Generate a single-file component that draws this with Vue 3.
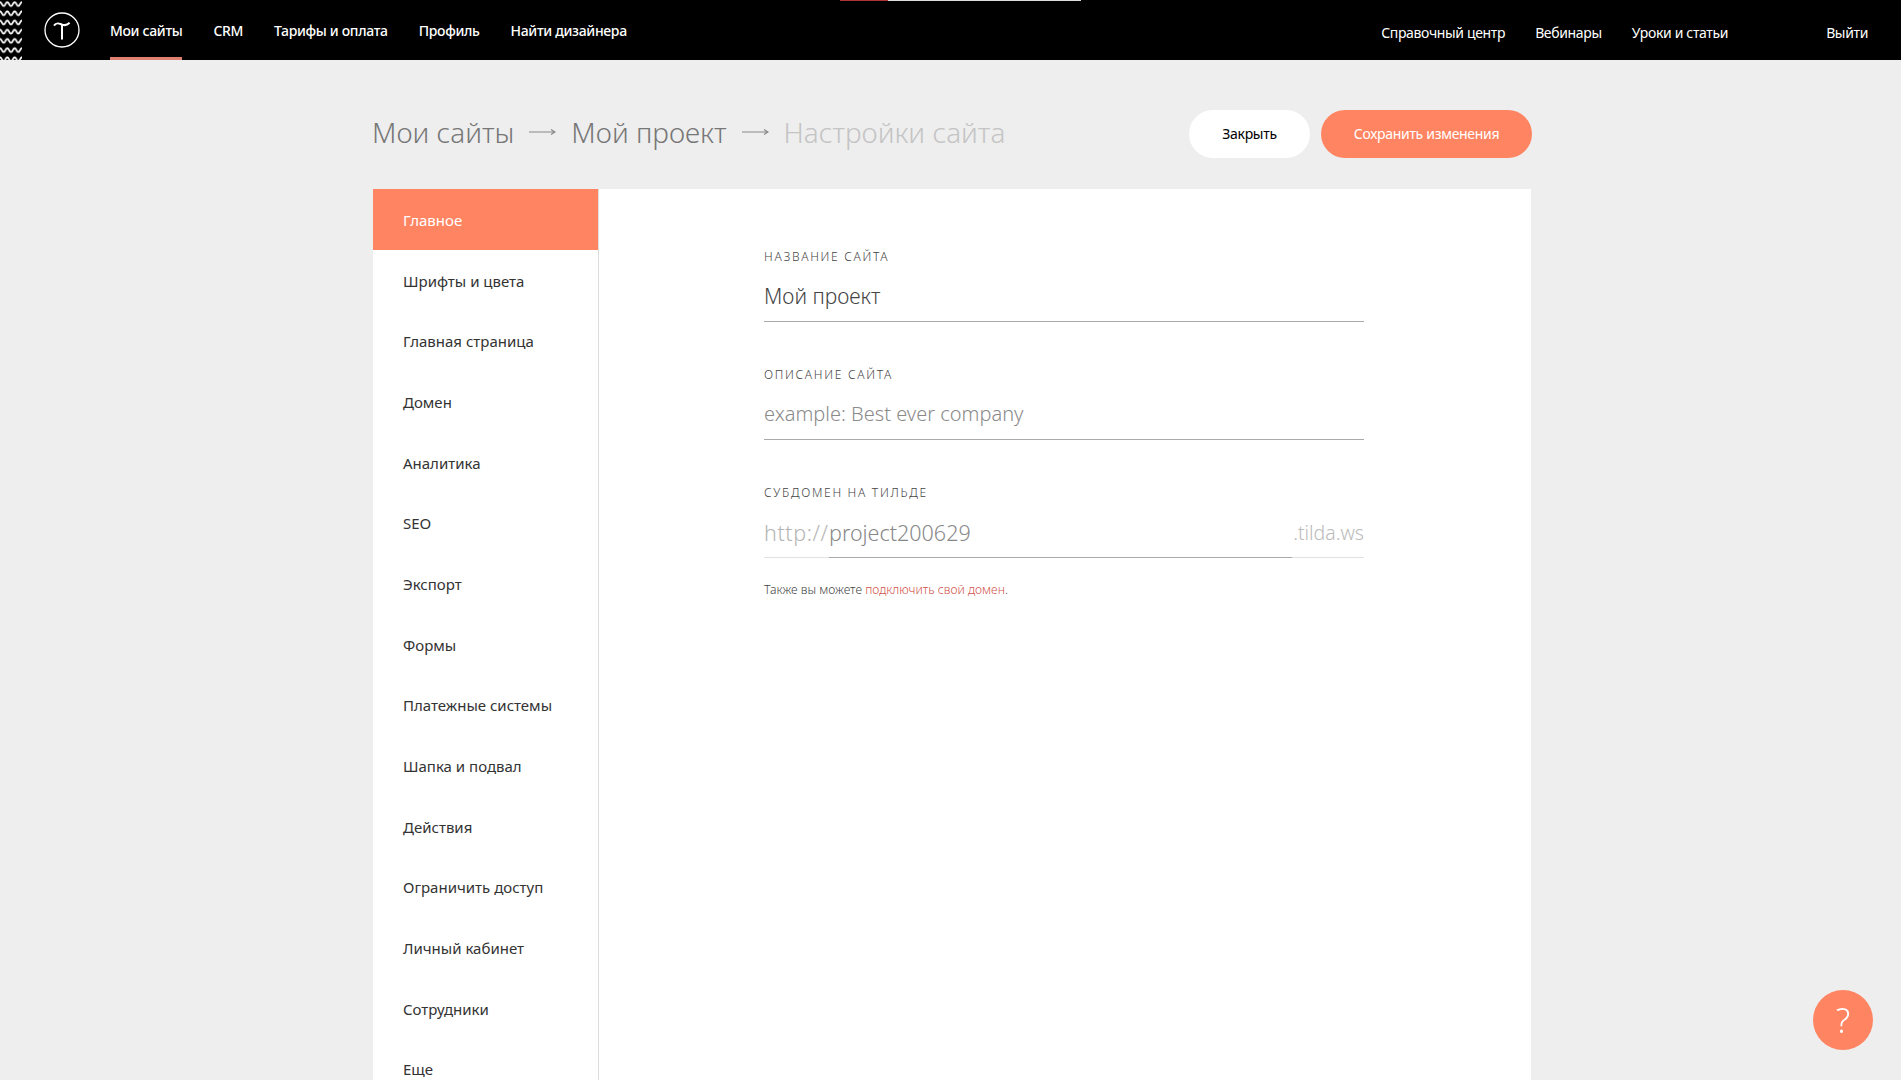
<template>
  <div class="page">
    <header class="topbar">
      <div class="progress"><span class="progress-done" /></div>
      <svg class="zigzag" width="22" height="60" aria-hidden="true">
        <defs>
          <pattern id="zz" width="7.33" height="9.2" patternUnits="userSpaceOnUse">
            <path d="M0 2 C1.8 2 1.8 6 3.66 6 S5.5 2 7.33 2" fill="none" stroke="#fff" stroke-width="1.8" />
          </pattern>
        </defs>
        <rect width="22" height="60" fill="url(#zz)" />
      </svg>
      <svg class="logo" width="36" height="36" viewBox="0 0 36 36" aria-hidden="true">
        <circle cx="18" cy="18" r="17" fill="none" stroke="#fff" stroke-width="1.3" />
        <path d="M10 13.6 C12.5 9.8 15.5 11.6 18 12.6 C20.5 13.6 23 13.4 25.6 10.8" fill="none" stroke="#fff" stroke-width="2" />
        <path d="M18 12.6 V27.5" fill="none" stroke="#fff" stroke-width="2" />
      </svg>
      <nav class="nav-main">
        <a v-for="item in mainNav" :key="item" class="nav-link" :class="{ active: item === 'Мои сайты' }">{{ item }}</a>
      </nav>
      <nav class="nav-side">
        <a v-for="item in sideNav" :key="item" class="side-link">{{ item }}</a>
        <a class="side-link logout">Выйти</a>
      </nav>
    </header>

    <main class="wrap">
      <div class="title-row">
        <div class="crumbs">
          <span>Мои сайты</span>
          <svg class="arrow" width="27" height="10" viewBox="0 0 27 10"><path d="M0 5H26M22 2.5L26 5L22 7.5" fill="none" stroke="#888" stroke-width="1.2" /></svg>
          <span>Мой проект</span>
          <svg class="arrow" width="27" height="10" viewBox="0 0 27 10"><path d="M0 5H26M22 2.5L26 5L22 7.5" fill="none" stroke="#888" stroke-width="1.2" /></svg>
          <span class="crumb-current">Настройки сайта</span>
        </div>
        <div class="actions">
          <button class="btn btn-close">Закрыть</button>
          <button class="btn btn-save">Сохранить изменения</button>
        </div>
      </div>

      <div class="panel">
        <ul class="menu">
          <li v-for="(item, i) in menu" :key="item" class="menu-item" :class="{ active: i === 0 }">{{ item }}</li>
        </ul>
        <section class="form">
          <div class="field">
            <div class="label">Название сайта</div>
            <div class="input value">Мой проект</div>
          </div>
          <div class="field">
            <div class="label">Описание сайта</div>
            <div class="input placeholder">example: Best ever company</div>
          </div>
          <div class="field">
            <div class="label">Субдомен на тильде</div>
            <div class="subdomain">
              <span class="sub-prefix">http://</span>
              <span class="sub-name">project200629</span>
              <span class="sub-suffix">.tilda.ws</span>
            </div>
            <p class="note">Также вы можете <a class="note-link">подключить свой домен</a>.</p>
          </div>
        </section>
      </div>
    </main>

    <button class="help">?</button>
  </div>
</template>

<script setup>
const mainNav = ['Мои сайты', 'CRM', 'Тарифы и оплата', 'Профиль', 'Найти дизайнера']
const sideNav = ['Справочный центр', 'Вебинары', 'Уроки и статьи']
const menu = [
  'Главное',
  'Шрифты и цвета',
  'Главная страница',
  'Домен',
  'Аналитика',
  'SEO',
  'Экспорт',
  'Формы',
  'Платежные системы',
  'Шапка и подвал',
  'Действия',
  'Ограничить доступ',
  'Личный кабинет',
  'Сотрудники',
  'Еще'
]
</script>

<style>
html, body {
  margin: 0;
  background: #eeeeee;
  overflow-x: hidden;
}
</style>

<style scoped>
.page {
  font-family: "Noto Sans", "Open Sans", sans-serif;
  color: #333;
}

.topbar {
  position: relative;
  display: flex;
  align-items: center;
  height: 60px;
  background: #000;
  color: #fff;
}

.progress {
  position: absolute;
  top: 0;
  left: 840px;
  width: 241px;
  height: 1px;
  background: #ddd;
}

.progress-done {
  display: block;
  width: 48px;
  height: 1px;
  background: #a33;
}

.zigzag {
  flex: none;
}

.logo {
  flex: none;
  margin-left: 22px;
}

.nav-main {
  display: flex;
  align-self: stretch;
  gap: 31px;
  margin-left: 30px;
}

.nav-link {
  display: flex;
  align-items: center;
  box-sizing: border-box;
  height: 60px;
  padding-top: 4px;
  border-bottom: 3px solid transparent;
  font-size: 14px;
  font-weight: 500;
  letter-spacing: -0.33px;
  white-space: nowrap;
}

.nav-link.active {
  border-bottom-color: #e08070;
}

.nav-side {
  display: flex;
  align-items: center;
  gap: 30px;
  margin-left: auto;
  padding: 5px 33px 0 0;
}

.side-link {
  font-size: 14px;
  letter-spacing: -0.35px;
  white-space: nowrap;
}

.logout {
  margin-left: 68px;
}

.wrap {
  width: 1160px;
  margin-left: 372px;
}

.title-row {
  display: flex;
  align-items: center;
  justify-content: space-between;
  height: 129px;
  padding-top: 18px;
  box-sizing: border-box;
}

.crumbs {
  display: flex;
  align-items: center;
  gap: 15px;
  padding-bottom: 3px;
  font-size: 28px;
  font-weight: 300;
  color: #777;
  white-space: nowrap;
}

.crumb-current {
  color: #c4c4c4;
}

.arrow {
  flex: none;
}

.actions {
  display: flex;
  gap: 11px;
}

.btn {
  height: 48px;
  border: 0;
  border-radius: 24px;
  font-family: inherit;
  font-size: 14px;
  letter-spacing: -0.3px;
  white-space: nowrap;
}

.btn-close {
  width: 121px;
  background: #fff;
  color: #000;
}

.btn-save {
  width: 211px;
  background: #ff8562;
  color: #fff;
}

.panel {
  display: flex;
  margin-left: 1px;
  width: 1158px;
  background: #fff;
}

.menu {
  flex: none;
  width: 225px;
  margin: 0;
  padding: 0;
  list-style: none;
  border-right: 1px solid #ddd;
}

.menu-item {
  display: flex;
  align-items: center;
  box-sizing: border-box;
  height: 60.7px;
  padding: 1px 0 0 30px;
  font-size: 15px;
  color: #333;
}

.menu-item.active {
  background: #ff8562;
  color: #fff;
}

.form {
  width: 600px;
  margin-left: 165px;
  padding-top: 61px;
}

.field {
  margin-bottom: 46px;
}

.label {
  font-size: 12px;
  font-weight: 300;
  line-height: 14px;
  letter-spacing: 1.7px;
  text-transform: uppercase;
  color: #444;
}

.input {
  box-sizing: border-box;
  height: 58px;
  padding-top: 17px;
  border-bottom: 1px solid #aaa;
  font-size: 20px;
  font-weight: 300;
  line-height: 30px;
}

.value {
  font-size: 21px;
  color: #444;
}

.placeholder {
  color: #8a8a8a;
}

.subdomain {
  display: flex;
  height: 58px;
  font-size: 21.5px;
  font-weight: 300;
  line-height: 30px;
}

.sub-prefix,
.sub-name,
.sub-suffix {
  box-sizing: border-box;
  height: 58px;
  padding-top: 18px;
}

.sub-prefix {
  width: 65px;
  border-bottom: 1px solid #e2e2e2;
  color: #b5b5b5;
  letter-spacing: 0.6px;
}

.sub-name {
  flex: 1;
  border-bottom: 1px solid #aaa;
  color: #888;
}

.sub-suffix {
  width: 72px;
  border-bottom: 1px solid #e2e2e2;
  color: #bbb;
  font-size: 19.5px;
  text-align: right;
  white-space: nowrap;
}

.note {
  margin: 24px 0 0;
  font-size: 12.2px;
  font-weight: 300;
  line-height: 16px;
  color: #444;
}

.note-link {
  color: #d0534a;
}

.help {
  position: fixed;
  right: 28px;
  bottom: 30px;
  width: 60px;
  height: 60px;
  padding: 0;
  border: 0;
  border-radius: 50%;
  background: #ff8562;
  color: #fff;
  font-family: inherit;
  font-size: 34px;
  font-weight: 300;
}
</style>
